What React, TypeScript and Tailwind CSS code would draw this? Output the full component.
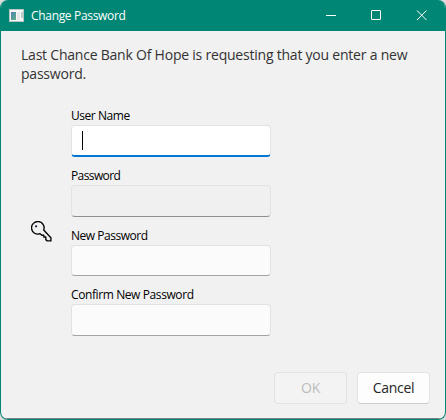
import React from "react";

type FieldProps = { label: string; tracking: string; variant: "active" | "disabled" | "normal"; height: string };

const boxStyles = {
  active: "bg-white border-[#e3e3e3] border-b-2 border-b-[#0078d4]",
  disabled: "bg-[#f0f0f0] border-[#e2e2e2] border-b-[#8f8f8f]",
  normal: "bg-[#fbfbfb] border-[#e2e2e2] border-b-[#a3a3a3]",
};

function Field({ label, tracking, variant, height }: FieldProps) {
  return (
    <div>
      <div className={`h-[18px] whitespace-nowrap text-[12px] leading-[18px] text-black ${tracking}`}>{label}</div>
      <div className={`flex w-[200px] items-center rounded-[4px] border pl-[10px] ${height} ${boxStyles[variant]}`}>
        {variant === "active" && <span className="h-[19px] w-px bg-black" />}
      </div>
    </div>
  );
}

export default function App() {
  return (
    <div className="h-[420px] w-[446px] bg-[#dcdcdc] font-['Open_Sans','Noto_Sans',sans-serif]">
      <div className="flex h-[420px] w-[446px] flex-col overflow-hidden rounded-[8px] border border-t-0 border-[#008675] bg-[#f1f1f1]">
        <header className="flex h-[31px] shrink-0 items-center bg-[#008675]">
          <svg className="ml-[8px] h-[13px] w-[15px]" viewBox="0 0 15 13" shapeRendering="crispEdges">
            <defs>
              <linearGradient id="pane" x1="0" y1="0" x2="1" y2="1">
                <stop offset="0" stopColor="#4b7fb5" />
                <stop offset="1" stopColor="#62b184" />
              </linearGradient>
            </defs>
            <rect width="15" height="13" fill="#b8c2c2" />
            <rect x="1" y="1" width="13" height="11" fill="#f7f7f8" />
            <rect x="2" y="3" width="5" height="8" fill="url(#pane)" />
            <rect x="8" y="3" width="3" height="8" fill="#e8e8ec" />
            <rect x="12" y="3" width="2" height="6" fill="#b6d2c4" />
          </svg>
          <span className="ml-[7px] text-[12px] leading-[18px] tracking-[-0.32px] text-white">Change Password</span>
          <svg className="ml-auto h-[31px] w-[122px]" viewBox="0 0 122 31" fill="none" stroke="#fff">
            <path d="M3 15.5h10" />
            <rect x="48.5" y="10.5" width="9" height="9" rx="0.5" />
            <path d="M94 10.5l9.5 9.5M103.5 10.5L94 20" />
          </svg>
        </header>
        <main className="flex flex-1 flex-col">
          <p className="ml-[20px] mt-[14px] whitespace-nowrap text-[14px] leading-[19px] tracking-[-0.22px] text-[#333]">
            Last Chance Bank Of Hope is requesting that you enter a new<br />password.
          </p>
          <div className="ml-[30px] mt-[24px] flex">
            <svg className="mt-[114px] h-[22px] w-[22px] shrink-0" viewBox="0.5 0.5 22 22" fill="none" stroke="#080808" strokeWidth="1.4" strokeLinejoin="round">
              <path d="M13.2 9.6A6.3 6.3 0 1 0 9.6 13.2L11.4 14.8H13.3V16.5H15.3V19.1L16.8 20.4H20.4V17.2Z" />
              <circle cx="5.6" cy="5.8" r="1.1" fill="#182444" stroke="none" />
            </svg>
            <div className="ml-[18px] flex flex-col gap-[10px]">
              <Field label="User Name" tracking="tracking-[-0.45px]" variant="active" height="h-[32px]" />
              <Field label="Password" tracking="tracking-[-0.6px]" variant="disabled" height="h-[32px]" />
              <Field label="New Password" tracking="tracking-[-0.48px]" variant="normal" height="h-[31px]" />
              <Field label="Confirm New Password" tracking="tracking-[-0.4px]" variant="normal" height="h-[32px]" />
            </div>
          </div>
          <div className="mb-[14px] mr-[15px] mt-auto flex justify-end gap-[10px] text-[14px] tracking-[-0.3px]">
            <button disabled className="h-[32px] w-[73px] rounded-[4px] border border-[#e3e3e3] bg-[#f3f3f3] pb-px text-[#bdbdbd]">OK</button>
            <button className="h-[32px] w-[73px] rounded-[4px] border border-[#e3e3e3] border-b-[#cccccc] bg-[#fdfdfd] pb-px text-[#252525]">Cancel</button>
          </div>
        </main>
        <div className="h-px shrink-0 bg-[#7b7e7e]" />
      </div>
    </div>
  );
}
